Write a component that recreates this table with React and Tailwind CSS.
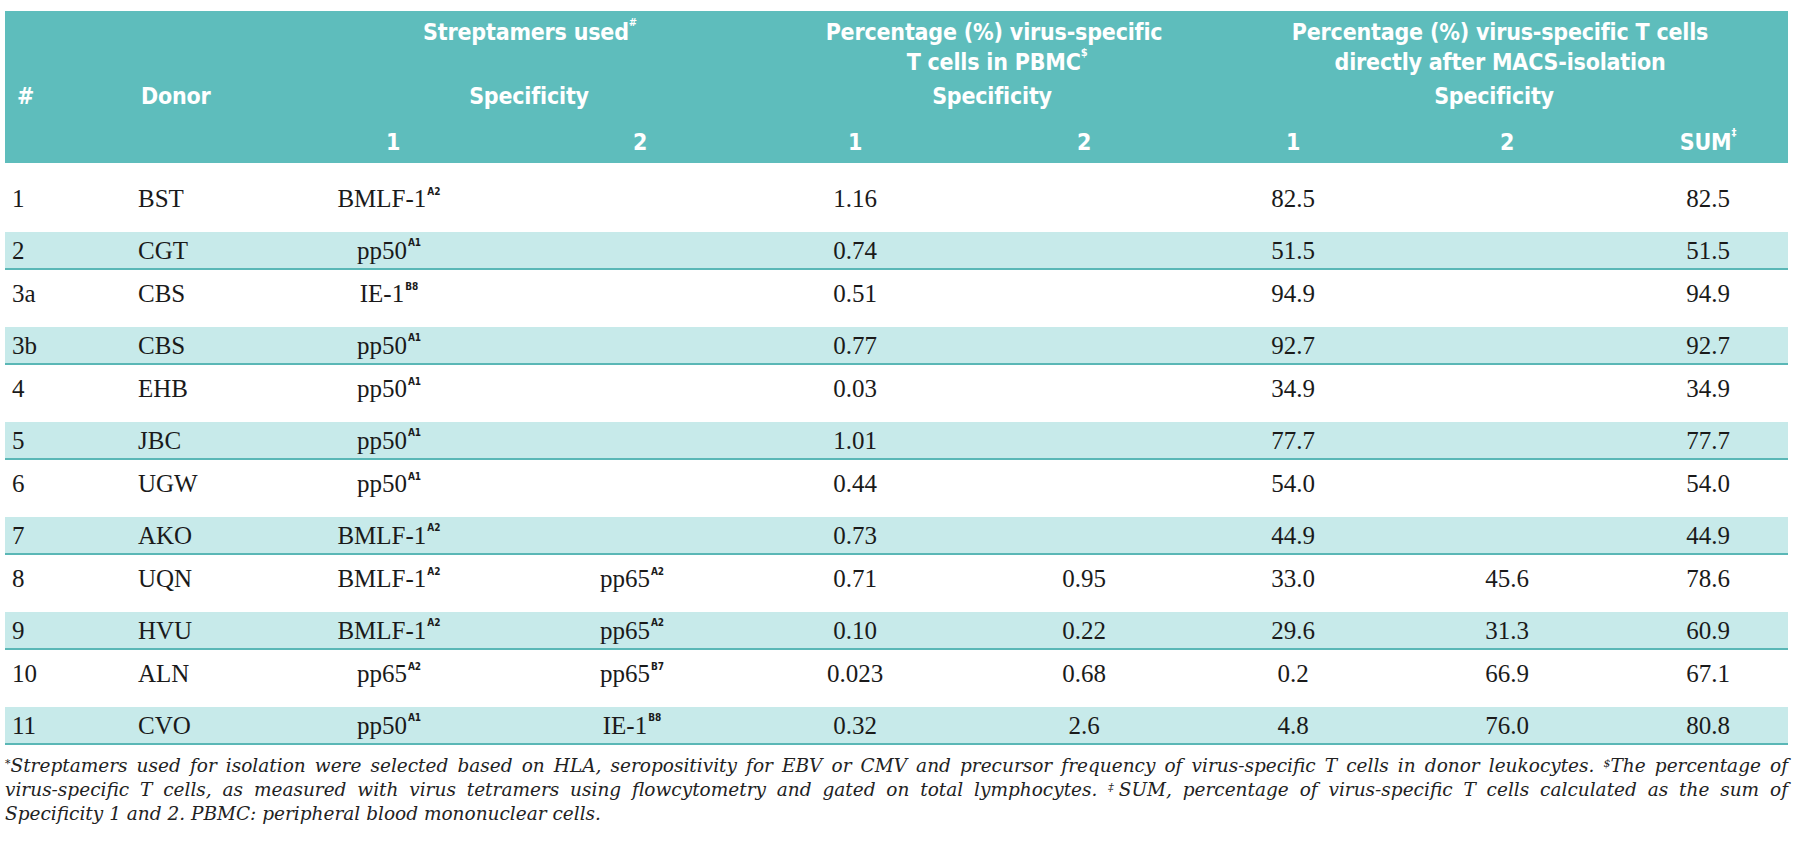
const COLS = 'grid grid-cols-[125px_126px_266px_220px_226px_232px_186px_242px_160px]'

const HEAD_FONT = "font-['DejaVu_Sans_Condensed','DejaVu_Sans',sans-serif] font-bold font-stretch-condensed tracking-[-0.2px]"
const BODY_FONT = "font-['Liberation_Serif',serif]"

// [#, donor, strep1, sup1, strep2, sup2, pbmc1, pbmc2, macs1, macs2, sum]
const ROWS = [
  ['1', 'BST', 'BMLF-1', 'A2', '', '', '1.16', '', '82.5', '', '82.5'],
  ['2', 'CGT', 'pp50', 'A1', '', '', '0.74', '', '51.5', '', '51.5'],
  ['3a', 'CBS', 'IE-1', 'B8', '', '', '0.51', '', '94.9', '', '94.9'],
  ['3b', 'CBS', 'pp50', 'A1', '', '', '0.77', '', '92.7', '', '92.7'],
  ['4', 'EHB', 'pp50', 'A1', '', '', '0.03', '', '34.9', '', '34.9'],
  ['5', 'JBC', 'pp50', 'A1', '', '', '1.01', '', '77.7', '', '77.7'],
  ['6', 'UGW', 'pp50', 'A1', '', '', '0.44', '', '54.0', '', '54.0'],
  ['7', 'AKO', 'BMLF-1', 'A2', '', '', '0.73', '', '44.9', '', '44.9'],
  ['8', 'UQN', 'BMLF-1', 'A2', 'pp65', 'A2', '0.71', '0.95', '33.0', '45.6', '78.6'],
  ['9', 'HVU', 'BMLF-1', 'A2', 'pp65', 'A2', '0.10', '0.22', '29.6', '31.3', '60.9'],
  ['10', 'ALN', 'pp65', 'A2', 'pp65', 'B7', '0.023', '0.68', '0.2', '66.9', '67.1'],
  ['11', 'CVO', 'pp50', 'A1', 'IE-1', 'B8', '0.32', '2.6', '4.8', '76.0', '80.8'],
]

function Sup({ children }) {
  return (
    <sup className="relative top-[-3px] ml-[1px] align-super text-[10px] font-bold font-['DejaVu_Sans_Condensed',sans-serif] font-stretch-condensed leading-none">
      {children}
    </sup>
  )
}

function Strep({ name, sup }) {
  if (!name) return null
  return (
    <span className="whitespace-nowrap">
      {name}
      <Sup>{sup}</Sup>
    </span>
  )
}

function Header() {
  return (
    <div className={`${COLS} grid-rows-[30px_28px_34px_46px] bg-[#5ebdbc] pt-[7px] pb-[7px] text-white text-[23px] leading-[28px] whitespace-nowrap ${HEAD_FONT}`}>
      {/* group titles */}
      <div className="col-start-3 col-span-2 row-start-1 text-center pl-[62px]">
        Streptamers used<sup className="text-[11px] align-super">#</sup>
      </div>
      <div className="col-start-5 col-span-2 row-start-1 text-center pl-[46px]">
        Percentage (%) virus-specific
      </div>
      <div className="col-start-5 col-span-2 row-start-2 text-center pl-[52px]">
        T cells in PBMC<sup className="text-[11px] align-super">$</sup>
      </div>
      <div className="col-start-7 col-span-3 row-start-1 text-center pl-[12px]">
        Percentage (%) virus-specific T cells
      </div>
      <div className="col-start-7 col-span-3 row-start-2 text-center pl-[12px]">
        directly after MACS-isolation
      </div>

      {/* third line */}
      <div className="col-start-1 row-start-3 self-end pl-[12px]">#</div>
      <div className="col-start-2 row-start-3 self-end pl-[11px]">Donor</div>
      <div className="col-start-3 col-span-2 row-start-3 self-end text-center pl-[60px]">Specificity</div>
      <div className="col-start-5 col-span-2 row-start-3 self-end text-center pl-[42px]">Specificity</div>
      <div className="col-start-7 col-span-3 row-start-3 self-end text-center">Specificity</div>

      {/* numbers */}
      <div className="col-start-3 row-start-4 self-end text-center pl-[8px]">1</div>
      <div className="col-start-4 row-start-4 self-end text-center pl-[16px]">2</div>
      <div className="col-start-5 row-start-4 self-end text-center">1</div>
      <div className="col-start-6 row-start-4 self-end text-center">2</div>
      <div className="col-start-7 row-start-4 self-end text-center">1</div>
      <div className="col-start-8 row-start-4 self-end text-center">2</div>
      <div className="col-start-9 row-start-4 self-end text-center">
        SUM<sup className="text-[11px] align-super">‡</sup>
      </div>
    </div>
  )
}

function Row({ r, shaded }) {
  const cells = (
    <>
      <div className="pl-[7px]">{r[0]}</div>
      <div className="pl-[8px]">{r[1]}</div>
      <div className="text-center"><Strep name={r[2]} sup={r[3]} /></div>
      <div className="text-center"><Strep name={r[4]} sup={r[5]} /></div>
      <div className="text-center">{r[6]}</div>
      <div className="text-center">{r[7]}</div>
      <div className="text-center">{r[8]}</div>
      <div className="text-center">{r[9]}</div>
      <div className="text-center">{r[10]}</div>
    </>
  )
  if (shaded) {
    return (
      <div className="h-[47.5px] pt-[9.5px]">
        <div className={`${COLS} items-center h-[38px] bg-[#c7eaea] border-b-2 border-[#5ab7b6]`}>
          {cells}
        </div>
      </div>
    )
  }
  return <div className={`${COLS} items-center h-[47.5px]`}>{cells}</div>
}

export default function App() {
  return (
    <div className="w-[1800px] h-[847px] bg-white text-[#1a1a1a] overflow-hidden">
      <div className="pt-[11px] pl-[5px] w-[1788px]">
        <Header />
        <div className={`pt-[12px] text-[25px] leading-none ${BODY_FONT}`}>
          {ROWS.map((r, i) => (
            <Row key={r[0]} r={r} shaded={i % 2 === 1} />
          ))}
        </div>
        <div className="mt-[9px] text-[18.5px] leading-[24px] italic text-[#222] font-['DejaVu_Serif',serif]">
          <p className="text-justify [text-align-last:justify]">
            <sup className="text-[11px]">*</sup>Streptamers used for isolation were selected based on HLA, seropositivity for EBV or CMV and precursor frequency of virus-specific T cells in donor leukocytes. <sup className="text-[11px]">$</sup>The percentage of
          </p>
          <p className="text-justify [text-align-last:justify]">
            virus-specific T cells, as measured with virus tetramers using flowcytometry and gated on total lymphocytes. <sup className="text-[11px]">‡</sup>SUM, percentage of virus-specific T cells calculated as the sum of
          </p>
          <p>Specificity 1 and 2. PBMC: peripheral blood mononuclear cells.</p>
        </div>
      </div>
    </div>
  )
}
